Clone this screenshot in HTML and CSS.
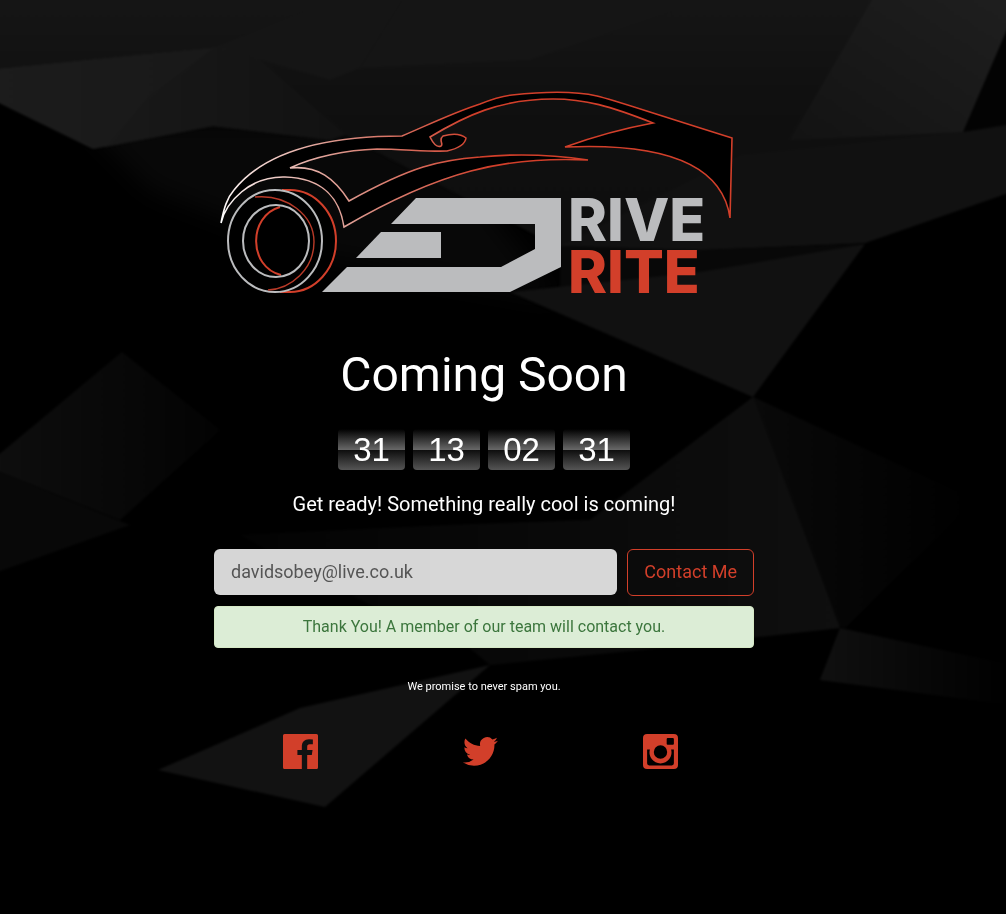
FILE: index.html
```html
<!DOCTYPE html>
<html lang="en">
<head>
<meta charset="utf-8">
<meta name="viewport" content="width=device-width, initial-scale=1">
<title>Drive Rite - Coming Soon</title>
<link rel="stylesheet" href="styles.css">
</head>
<body>
<svg class="backdrop" viewBox="0 0 1006 914" preserveAspectRatio="xMidYMid slice" aria-hidden="true">
  <defs>
    <filter id="soft" color-interpolation-filters="sRGB"><feGaussianBlur stdDeviation="1"/></filter>
    <filter id="haze" color-interpolation-filters="sRGB"><feGaussianBlur stdDeviation="12"/></filter>
    <linearGradient id="top" x1="0" y1="0" x2="0" y2="1"><stop offset="0" stop-color="#161616"/><stop offset=".4" stop-color="#101010"/><stop offset="1" stop-color="#0e0e0e"/></linearGradient>
    <linearGradient id="wing"><stop offset="0" stop-color="#1c1c1c"/><stop offset=".6" stop-color="#191919"/><stop offset="1" stop-color="#121212"/></linearGradient>
    <linearGradient id="wing2"><stop offset="0" stop-color="#191919"/><stop offset="1" stop-color="#121212"/></linearGradient>
    <linearGradient id="corner" x1="1" y1="0" x2="0" y2="1"><stop offset="0" stop-color="#1f1f1f"/><stop offset="1" stop-color="#131313"/></linearGradient>
    <linearGradient id="fall" x1="0" y1="0" x2="1" y2="0"><stop offset="0" stop-color="#101010"/><stop offset="1" stop-color="#000"/></linearGradient>
    <linearGradient id="rise" x1="1" y1="0" x2="0" y2="0"><stop offset="0" stop-color="#030303"/><stop offset="1" stop-color="#0e0e0e"/></linearGradient>
    <linearGradient id="floor" x1="0" y1="0" x2="1" y2="0"><stop offset="0" stop-color="#030303"/><stop offset="1" stop-color="#0f0f0f"/></linearGradient>
  </defs>
  <rect width="1006" height="914" fill="#000"/>
  <path d="M80 120H420L560 300L330 260L150 190Z" fill="#080808" filter="url(#haze)"/>
  <g filter="url(#soft)">
    <path d="M-5-5H1011V192L865 243L700 250L560 248L345 135L215 47L-5 69Z" fill="url(#top)"/>
    <path d="M405-5H720L530 60L360 68Z" fill="#151515"/>
    <path d="M215 47L345-5H405L360 68L330 80Z" fill="#151515"/>
    <path d="M-5 69L215 47L250 52L345 135L330 140L213 126L93 149L-5 101Z" fill="url(#wing)"/>
    <path d="M215 47L250 52L345 135L330 140L213 126L105 147L150 95Z" fill="url(#wing2)"/>
    <path d="M875-5H1011V30L963 132L790 140Z" fill="url(#corner)"/>
    <path d="M1011 20L963 132L1011 124Z" fill="#030303"/>
    <path d="M740 155L963 132L1011 126V192L865 243L700 250L560 246Z" fill="#111"/>
    <path d="M560 246L700 250L865 244L700 275L560 290Z" fill="#080808"/>
    <path d="M510 292L700 272L865 244L753 397Z" fill="#111"/>
    <path d="M753 397L975 500L845 628L590 540Z" fill="url(#fall)"/>
    <path d="M240 535L450 525L590 520L753 397L840 628L640 650L490 665L460 640L380 610Z" fill="url(#floor)"/>
    <path d="M840 628L1011 665V705L820 680Z" fill="url(#fall)"/>
    <path d="M122 352L-5 458V470L120 520L220 430Z" fill="url(#rise)"/>
    <path d="M-5 470L130 525L-5 573Z" fill="#080808"/>
    <path d="M158 770L300 708L490 665L325 807Z" fill="#121212"/>
  </g>
</svg>

<main class="page">
  <svg class="logo" viewBox="214 88 540 210" role="img" aria-label="Drive Rite">
    <defs>
      <linearGradient id="body" gradientUnits="userSpaceOnUse" x1="221" y1="223" x2="480" y2="140"><stop offset="0" stop-color="#fff"/><stop offset=".5" stop-color="#dc9388"/><stop offset="1" stop-color="#d23f2a"/></linearGradient>
    </defs>
    <path class="car" d="M221 223C224 208 227 198 234 190C266 150 330 136 402 136C430 124 455 112 480 104C495 98 503 96 512 95C540 92 575 91 597 96C614 100 630 106 732 138L730 218C722 160 655 143 565 147C590 138 615 130 653 123C610 106 585 99 553 99C500 99 465 116 430 137C433 143 437 148 441 146C444 144 438 140 443 136C450 134 460 133 466 138C465 145 456 149 447 151C430 152 402 149 377 149C346 150 313 157 290 168C318 165 335 179 349 201C412 166 440 160 480 157C520 153 555 155 588 160C505 156 440 171 344 227C340 200 324 178 285 177C250 176 226 202 221 223Z"/>
    <ellipse class="disc" cx="290" cy="241" rx="46" ry="51"/>
    <path class="tyre" d="M282 190H290C315 190 336 213 336 241S315 292 290 292H280"/>
    <ellipse class="rim disc" cx="275" cy="241" rx="47" ry="51"/>
    <path class="groove" d="M255 197C287 194 314 215 314 242C314 269 291 289 268 290"/>
    <path class="tyre" d="M280 207C248 216 248 267 281 275"/>
    <ellipse class="rim" cx="276" cy="241" rx="33" ry="36"/>
    <path class="mark" d="M416 198H561V267L510 292H322L347 267H501L535 249V224H391Z"/>
    <path class="mark" d="M381 232H441V258H356Z"/>
    <text class="word drive" x="568" y="241">RIVE</text>
    <text class="word rite" x="568" y="293">RITE</text>
  </svg>

  <h1 class="title">Coming Soon</h1>
  <div class="countdown" role="timer" aria-label="Time remaining">
    <span class="tile">31</span><span class="tile">13</span><span class="tile">02</span><span class="tile">31</span>
  </div>
  <p class="lead">Get ready! Something really cool is coming!</p>

  <form class="signup">
    <input class="email" type="email" aria-label="Email address" value="davidsobey@live.co.uk">
    <button class="send" type="button">Contact Me</button>
  </form>
  <p class="thanks" role="status">Thank You! A member of our team will contact you.</p>
  <p class="promise">We promise to never spam you.</p>

  <nav class="social" aria-label="Social media">
    <a href="#facebook" aria-label="Facebook"><svg class="icon" viewBox="0 0 34 34"><path d="M1.500 0H32.500Q34 0 34 1.500V32.500Q34 34 32.500 34H23.500V20.500H28L28.700 15.500H23.500V12.500C23.500 10.700 24 9.900 26 9.900H29V5.300L25.300 5C20.800 5 18.300 7.800 18.300 12V15.500H14V20.500H18.300V34H1.500Q0 34 0 32.500V1.500Q0 0 1.500 0Z"/></svg></a>
    <a href="#twitter" aria-label="Twitter"><svg class="icon" viewBox="0 0 24 24"><path d="M23.950 4.570a10 10 0 0 1-2.820.770 4.960 4.960 0 0 0 2.160-2.720c-.950.550-2 .950-3.130 1.180a4.920 4.920 0 0 0-8.380 4.480C7.690 8.100 4.070 6.130 1.640 3.160a4.820 4.820 0 0 0-.670 2.480c0 1.710.870 3.210 2.190 4.090a4.900 4.900 0 0 1-2.230-.610v.060a4.920 4.920 0 0 0 3.950 4.830 5 5 0 0 1-2.210.080 4.940 4.940 0 0 0 4.600 3.420A9.870 9.870 0 0 1 0 19.540a13.990 13.990 0 0 0 7.560 2.210c9.050 0 14-7.500 14-13.980 0-.210 0-.420-.020-.630a9.940 9.940 0 0 0 2.410-2.570Z"/></svg></a>
    <a href="#instagram" aria-label="Instagram"><svg class="icon" viewBox="0 0 34 34"><path fill-rule="evenodd" d="M4 0H30Q34 0 34 4V30Q34 34 30 34H4Q0 34 0 30V4Q0 0 4 0ZM24 4Q23 4 23 5V9.500Q23 10.500 24 10.500H29Q30 10.500 30 9.500V5Q30 4 29 4ZM4 15V28.500Q4 30.500 6 30.500H28Q30 30.500 30 28.500V15H27.300A10.700 10.700 0 1 1 6.700 15ZM17 11A6.500 6.500 0 1 0 17 24A6.500 6.500 0 1 0 17 11Z"/></svg></a>
  </nav>
</main>
</body>
</html>
```
FILE: styles.css
```css
* { box-sizing: border-box; }

body {
  margin: 0;
  min-height: 100vh;
  background: #000;
  color: #fff;
  font-family: Roboto, "Liberation Sans", sans-serif;
}

.backdrop {
  position: fixed;
  inset: 0;
  z-index: -1;
  width: 100%;
  height: 100%;
}

/* content column sits left of centre by half the gutter */
.page {
  max-width: 578px;
  margin: 0 auto;
  padding: 88px 38px 40px 0;
  text-align: center;
}

.logo { display: block; width: 100%; overflow: visible; }
.car { fill: #000; stroke: url(#body); stroke-width: 1.6; }
.tyre { fill: none; stroke: #d23f2a; stroke-width: 2; }
.groove { fill: none; stroke: #b93a28; stroke-width: 1.4; }
.rim { fill: none; stroke: #bbbcbe; stroke-width: 2; }
.disc { fill: #000; }
.mark { fill: #bbbcbe; }
.word { font: 800 59px Inter, Lato, sans-serif; }
.drive { fill: #bbbcbe; }
.rite { fill: #d23f2a; }

.title {
  margin: 49px 0 26px;
  font-size: 48px;
  font-weight: 400;
  line-height: 56px;
}

.countdown { display: flex; justify-content: center; gap: 8px; }
.tile {
  width: 67px;
  border-radius: 4px;
  background: linear-gradient(#000, #666 50%, #0c0c0c 50%, #555);
  font: 33px/41px "Liberation Sans", Arial, sans-serif;
}

.lead { margin: 20px 0 31px; font-size: 20px; line-height: 28px; }

.signup { display: flex; align-items: flex-start; gap: 10px; }
.email, .send { font: 18px/24px Roboto, sans-serif; border-radius: 6px; }
.email {
  flex: 1;
  min-width: 0;
  height: 46px;
  padding: 10px 17px 12px;
  border: 0;
  background: rgba(255, 255, 255, .84);
  color: #555;
}
.send {
  height: 47px;
  padding: 9px 16px 11px;
  border: 1px solid #d23f2a;
  background: transparent;
  color: #d23f2a;
  white-space: nowrap;
}

.thanks {
  margin: 10px 0 31px;
  padding: 9px 15px;
  border: 1px solid #d6e9c6;
  border-radius: 4px;
  background: #dcedd6;
  color: #3c763d;
  font-size: 16px;
  line-height: 22px;
}

.promise { margin: 0 0 39px; font-size: 11px; line-height: 16px; }

.social { display: grid; grid-template-columns: repeat(3, 1fr); }
.social a { margin-right: 8px; color: #d23f2a; }
.icon { display: inline-block; width: 35px; height: 35px; fill: currentColor; }
```
